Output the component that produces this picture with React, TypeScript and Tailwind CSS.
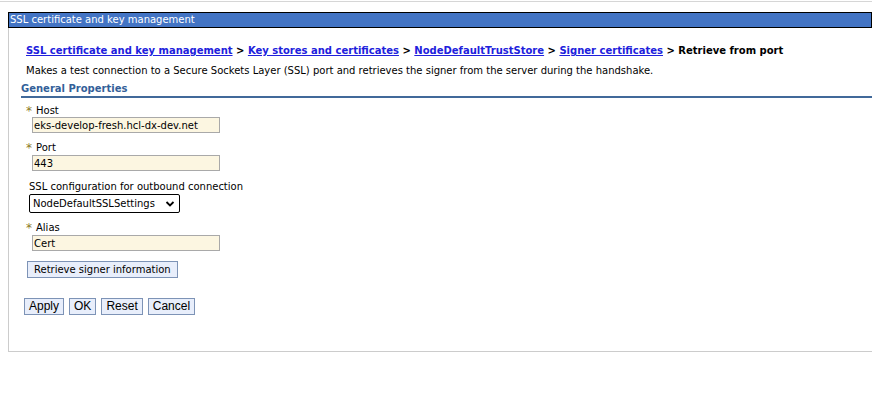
import React from 'react';

const Label = ({ text, required }: { text: string; required?: boolean }) => (
  <div className="flex items-center h-[12px] leading-[12px]">
    {required ? (
      <span className="w-[10px] text-[#8c7a1d] text-[12px] leading-[12px]">*</span>
    ) : (
      <span className="w-[3px]" />
    )}
    <span>{text}</span>
  </div>
);

const TextInput = ({ value }: { value: string }) => (
  <input
    readOnly
    value={value}
    className="block ml-[6px] w-[188px] h-[16px] border border-[#a9a9a9] bg-[#fcf6e1] px-[1px] text-[10px] leading-[14px] text-black outline-none"
  />
);

const Btn = ({ children, className = '' }: { children: React.ReactNode; className?: string }) => (
  <button className={`h-[17px] border border-[#7d93b6] bg-[#e8eefb] leading-[15px] text-black ${className}`}>
    {children}
  </button>
);

export default function App() {
  return (
    <div
      className="w-[872px] h-[414px] bg-white text-black text-[10px] overflow-hidden"
      style={{ fontFamily: '"DejaVu Sans", Verdana, sans-serif' }}
    >
      <div className="h-px mt-px bg-[#d6d6d6]" />
      <div className="ml-[8px] mt-[10px] h-[16px] border border-black bg-[#4374c4] text-white pl-[1px] text-[10px] leading-[14px]">
        SSL certificate and key management
      </div>
      <div className="ml-[8px] h-[324px] border-l border-b border-[#cccccc] pt-[17px]">
        <div className="pl-[17px] font-bold leading-[12px]">
          <a className="text-[#2020dc] underline">SSL certificate and key management</a>
          {' > '}
          <a className="text-[#2020dc] underline">Key stores and certificates</a>
          {' > '}
          <a className="text-[#2020dc] underline">NodeDefaultTrustStore</a>
          {' > '}
          <a className="text-[#2020dc] underline">Signer certificates</a>
          {' > '}
          Retrieve from port
        </div>
        <div className="pl-[17px] mt-[8px] leading-[12px]">
          Makes a test connection to a Secure Sockets Layer (SSL) port and retrieves the signer from the server during the handshake.
        </div>
        <div className="ml-[12px] mt-[6px] font-bold text-[#335f99] leading-[12px] border-b-2 border-[#41699a] pb-[1px]">
          General Properties
        </div>
        <div className="pl-[17px]">
          <div className="mt-[7px]">
            <Label text="Host" required />
          </div>
          <TextInput value="eks-develop-fresh.hcl-dx-dev.net" />

          <div className="mt-[9px]">
            <Label text="Port" required />
          </div>
          <div className="mt-px">
            <TextInput value="443" />
          </div>

          <div className="mt-[10px] ml-[3px] h-[12px] leading-[12px]">SSL configuration for outbound connection</div>
          <div className="mt-px ml-[3px] w-[151px] h-[19px] border border-black rounded-[2px] flex items-center justify-between pl-[3px] pr-[4px]">
            <span>NodeDefaultSSLSettings</span>
            <svg width="10" height="8" viewBox="0 0 10 8">
              <path d="M1.5 2 L5 5.5 L8.5 2" fill="none" stroke="black" strokeWidth="1.8" />
            </svg>
          </div>

          <div className="mt-[9px]">
            <Label text="Alias" required />
          </div>
          <div className="mt-px">
            <TextInput value="Cert" />
          </div>

          <div className="mt-[10px] ml-px">
            <Btn className="px-[6px] text-[10px]">Retrieve signer information</Btn>
          </div>
        </div>
        <div
          className="pl-[15px] mt-[20px] flex gap-[5px]"
          style={{ fontFamily: '"Liberation Sans", Arial, sans-serif' }}
        >
          {['Apply', 'OK', 'Reset', 'Cancel'].map((b) => (
            <Btn key={b} className="px-[4px] text-[12px]">
              {b}
            </Btn>
          ))}
        </div>
      </div>
    </div>
  );
}
